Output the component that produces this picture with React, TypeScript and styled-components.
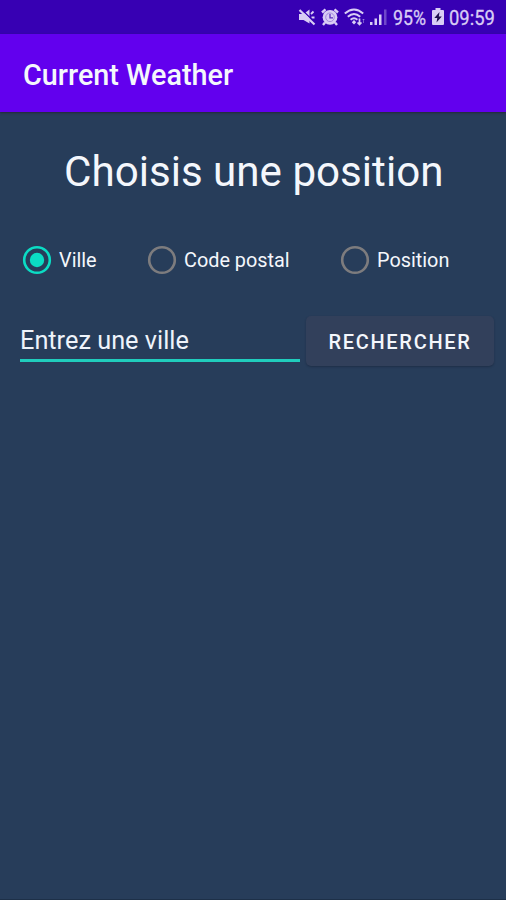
import React, { useState } from "react";
import styled, { createGlobalStyle } from "styled-components";

const GlobalStyle = createGlobalStyle`
  html, body { margin: 0; padding: 0; background: #273d5a; }
  *, *::before, *::after { box-sizing: border-box; }
`;

const Screen = styled.div`
  display: flex;
  flex-direction: column;
  width: 506px;
  height: 900px;
  overflow: hidden;
  background: #273d5a;
  border-bottom: 1px solid #1d3048;
  color: #f4f7fc;
  font-family: Roboto, "Liberation Sans", sans-serif;
`;

const StatusBar = styled.header`
  display: flex;
  align-items: center;
  flex: none;
  height: 34px;
  padding-left: 298px;
  background: #3700b3;
  color: #d9cdf5;
`;

const StatusIcon = styled.svg<{ $gap: number }>`
  display: block;
  flex: none;
  margin-right: ${(p) => p.$gap}px;
`;

const StatusText = styled.span<{ $width: number; $squeeze: number }>`
  flex: none;
  width: ${(p) => p.$width}px;
  font-size: 20px;
  line-height: 24px;
  white-space: nowrap;
  -webkit-text-stroke: 0.3px currentColor;
  transform: translateY(1px) scaleX(${(p) => p.$squeeze});
  transform-origin: left center;
`;

const AppBar = styled.div`
  position: relative;
  display: flex;
  align-items: center;
  flex: none;
  height: 78px;
  padding: 3px 23px 0;
  background: #6200ee;
  box-shadow: 0 1px 2px #222a35;
`;

const AppTitle = styled.h1`
  margin: 0;
  font-size: 28.800px;
  font-weight: 500;
  line-height: 36px;
  white-space: nowrap;
`;

const Content = styled.main`
  display: flex;
  flex-direction: column;
  padding: 32px 12px 0 20px;
`;

const Heading = styled.h2`
  margin: 0 0 0 44px;
  font-size: 42.150px;
  font-weight: 400;
  line-height: 56px;
  white-space: nowrap;
`;

const RadioGroup = styled.div`
  display: grid;
  grid-template-columns: 125px 193px 1fr;
  margin-top: 45px;
  padding-left: 2px;
`;

const RadioOption = styled.button`
  display: flex;
  align-items: center;
  gap: 7px;
  height: 30px;
  padding: 0;
  border: 0;
  background: none;
  color: inherit;
  font: 400 19.850px/30px Roboto, "Liberation Sans", sans-serif;
  white-space: nowrap;
`;

const RadioLabel = styled.span`
  padding-top: 2px;
`;

const RadioMark = styled.svg<{ $checked: boolean }>`
  flex: none;
  color: ${(p) => (p.$checked ? "#0bdcc4" : "#7d7c7e")};
`;

const SearchRow = styled.form`
  display: flex;
  align-items: flex-start;
  gap: 6px;
  margin-top: 41px;
`;

const CityInput = styled.input`
  width: 280px;
  height: 46px;
  padding: 6px 0 0;
  border: 0;
  border-bottom: 3px solid #20cdbd;
  border-radius: 0;
  outline: none;
  background: transparent;
  font: 400 25.300px/30px Roboto, "Liberation Sans", sans-serif;
  color: #f4f7fc;
  &::placeholder { color: #eef3fa; opacity: 1; }
`;

const SearchButton = styled.button`
  width: 188px;
  height: 50px;
  padding: 2px 0 0;
  border: 0;
  border-radius: 5px;
  background: #32405b;
  box-shadow: 0 1px 2px rgba(20, 32, 52, 0.45);
  color: #f4f7fc;
  font: 500 20px/24px Roboto, "Liberation Sans", sans-serif;
  letter-spacing: 1.700px;
  white-space: nowrap;
`;

const OPTIONS = ["Ville", "Code postal", "Position"];

const MuteIcon = () => (
  <StatusIcon $gap={5} width="18" height="18" viewBox="0 0 18 18">
    <path d="M1 6h4.500L11.500 1.500v14L5.500 12H1z" fill="currentColor" />
    <path d="M13 6l2.500-2.500M13.500 9.500h3" stroke="currentColor" strokeWidth="1.800" />
    <path d="M3.500 1.500L17 14.500" stroke="#3700b3" strokeWidth="1.400" />
    <path d="M1.500 2l15 14.500" stroke="currentColor" strokeWidth="2.200" />
  </StatusIcon>
);

const AlarmIcon = () => (
  <StatusIcon $gap={5} width="18" height="18" viewBox="0 0 18 18">
    <circle cx="9" cy="9.300" r="7.400" fill="currentColor" />
    <path d="M1 4.500L4.500 1.300M17 4.500l-3.500-3.200M4 14.500L2 17M14 14.500l2 2.500" stroke="currentColor" strokeWidth="2.400" />
    <circle cx="9" cy="9.300" r="4.300" fill="none" stroke="#9c82d8" strokeWidth="0.900" />
    <path d="M9 6v3.800h3" fill="none" stroke="#5a31bd" strokeWidth="1.300" />
  </StatusIcon>
);

const WifiIcon = () => (
  <StatusIcon $gap={4} width="22" height="18" viewBox="0 0 22 18">
    <g fill="none" stroke="currentColor" strokeWidth="1.900">
      <path d="M.8 5.500Q10 -2.500 19.200 5.500" />
      <path d="M3.800 8.800Q10 3 16.200 8.800" />
      <path d="M6.600 11.800Q10 8.600 13.400 11.800" />
    </g>
    <path d="M10 12l2.200 2.200L10 16.500l-2.200-2.300z" fill="currentColor" />
    <path d="M15.500 10.500v6m-2-2l2 2 2-2" fill="none" stroke="currentColor" strokeWidth="1.700" />
    <path d="M19.500 15v-4m-1 1l1-1 1 1" fill="none" stroke="currentColor" strokeOpacity=".4" />
  </StatusIcon>
);

const SignalIcon = () => (
  <StatusIcon $gap={6} width="17" height="18" viewBox="0 0 17 18">
    <path d="M0 14h2.500v3H0zM4.500 10.500H7V17H4.500zM9 6.500h2.500V17H9z" fill="currentColor" />
    <path d="M14 1.500h2.500V17H14z" fill="currentColor" opacity=".35" />
  </StatusIcon>
);

const BatteryIcon = () => (
  <StatusIcon $gap={5} width="12" height="18" viewBox="0 0 12 18">
    <path d="M3.500 0h5v2H11q1 0 1 1v13q0 1-1 1H1q-1 0-1-1V3q0-1 1-1h2.500z" fill="currentColor" />
    <path d="M7.500 4L2.300 10h3l-.8 4.500L9.800 8.500h-3z" fill="#20104f" />
  </StatusIcon>
);

export default function App() {
  const [selected, setSelected] = useState(OPTIONS[0]);
  return (
    <>
      <GlobalStyle />
      <Screen>
        <StatusBar>
          <MuteIcon />
          <AlarmIcon />
          <WifiIcon />
          <SignalIcon />
          <StatusText $width={39} $squeeze={0.89}>95%</StatusText>
          <BatteryIcon />
          <StatusText $width={46} $squeeze={0.92}>09:59</StatusText>
        </StatusBar>
        <AppBar>
          <AppTitle>Current Weather</AppTitle>
        </AppBar>
        <Content>
          <Heading>Choisis une position</Heading>
          <RadioGroup role="radiogroup">
            {OPTIONS.map((label) => (
              <RadioOption
                key={label}
                role="radio"
                aria-checked={selected === label}
                onClick={() => setSelected(label)}
              >
                <RadioMark $checked={selected === label} width="30" height="30" viewBox="0 0 30 30">
                  <circle cx="15" cy="15" r="12.800" fill="none" stroke="currentColor" strokeWidth="2.600" />
                  {selected === label && <circle cx="15" cy="15" r="7.200" fill="currentColor" />}
                </RadioMark>
                <RadioLabel>{label}</RadioLabel>
              </RadioOption>
            ))}
          </RadioGroup>
          <SearchRow onSubmit={(e) => e.preventDefault()}>
            <CityInput placeholder="Entrez une ville" />
            <SearchButton type="submit">RECHERCHER</SearchButton>
          </SearchRow>
        </Content>
      </Screen>
    </>
  );
}
